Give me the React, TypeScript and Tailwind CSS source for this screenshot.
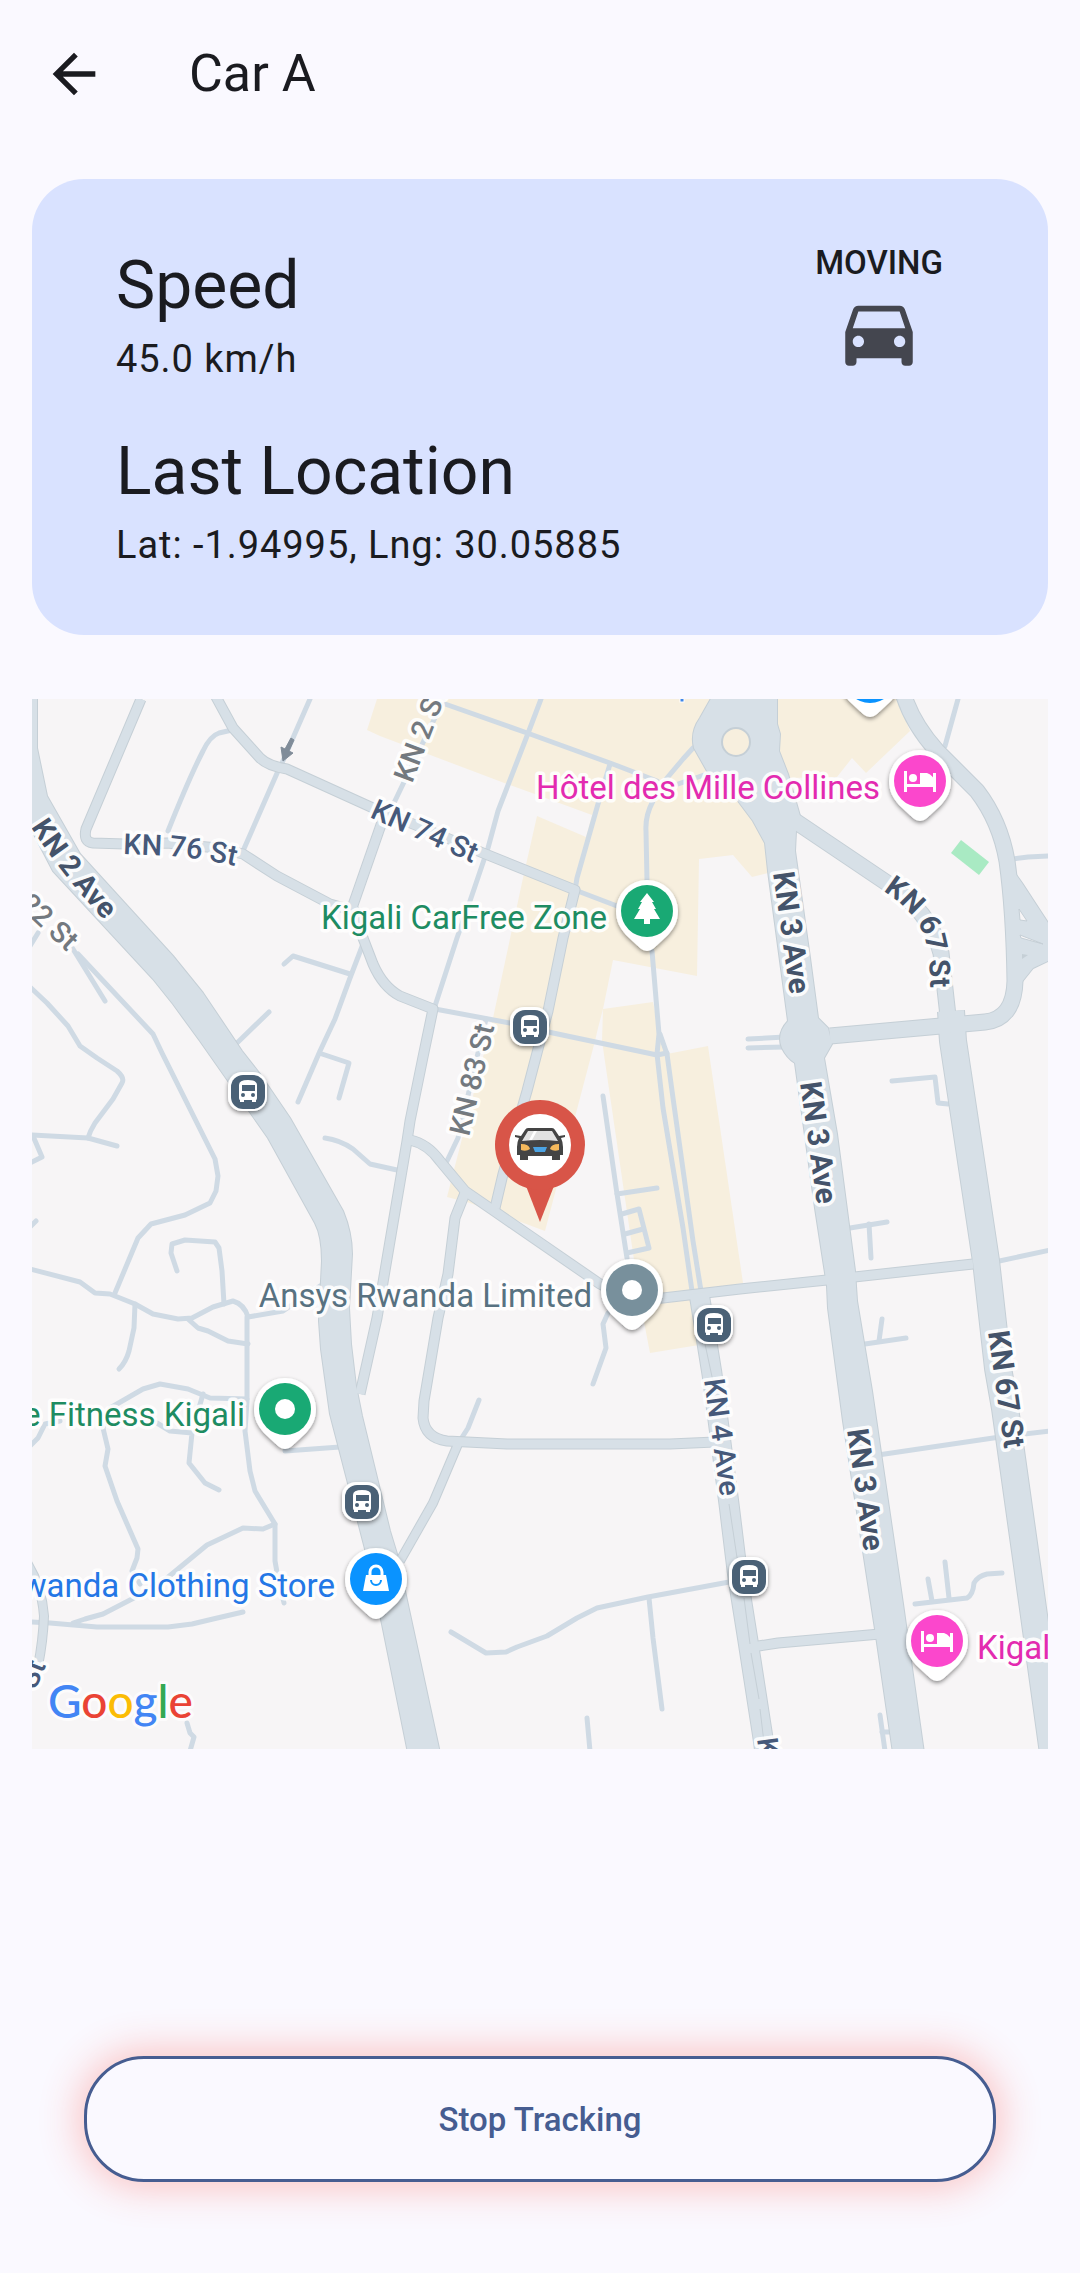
import React from "react";
import { MdArrowBack, MdDirectionsCar } from "react-icons/md";

const LAND =
  "M377 698L367 729L380 735L507 783L592 814L586 836L537 815L523 877L493 1017L447 1196L470 1202L545 1230L595 1040L598 1027L603 1008L613 959L697 975L699 858L733 854L752 876L768 872L788 777L837 776L852 757L866 772L910 730L897 698Z M603 1008L653 1001L660 1035L667 1053L708 1045L743 1282L697 1290L705 1343L650 1352L640 1300L602 1040Z";

const LANES = [
  "M232 729L219 732Q210 735 203 750Q190 775 168 830",
  "M310 698L282 762",
  "M278 770L243 850",
  "M363 943L350 977L335 1018L320 1050L298 1101",
  "M322 1053L349 1062L339 1097",
  "M350 973L293 955L284 963",
  "M269 1011L237 1042",
  "M73 948L105 1000",
  "M78 953L153 1033L162 1052L215 1158L218 1175L216 1190L210 1202L185 1214L151 1223L138 1237L115 1292",
  "M30 945L38 932",
  "M30 986L47 1002L68 1025L80 1045L97 1057L117 1070Q125 1077 122 1082L113 1098L95 1122Q90 1130 88 1137",
  "M30 1134L88 1137L117 1145",
  "M33 1135L42 1156L30 1162",
  "M30 1226L36 1220",
  "M30 1268L80 1281L95 1292L110 1293L135 1303L153 1313L178 1318L192 1317L213 1306L233 1300Q244 1303 248 1316L283 1310L320 1285",
  "M135 1303L134 1327L129 1350Q126 1361 119 1368",
  "M177 1270L171 1252L172 1243L185 1239L215 1241L219 1247L222 1270L224 1303",
  "M188 1318L198 1327L208 1330L228 1340L248 1343",
  "M247 1316L247 1400L245 1430L250 1470L255 1490L275 1523L275 1560L278 1577L284 1602",
  "M247 1398L210 1397L188 1388L160 1383L143 1388L110 1407L103 1427L108 1448L105 1465L117 1500L138 1548L137 1557L132 1570L140 1583",
  "M30 1445L38 1437L45 1423L60 1420",
  "M203 1393L199 1407",
  "M157 1422L170 1430L192 1432L189 1462L205 1482L219 1489",
  "M275 1523L263 1528L243 1527L207 1544L167 1577L132 1598L103 1613L85 1618L73 1622",
  "M30 1621L50 1622L97 1626L168 1626L192 1623L213 1618L243 1611",
  "M285 1450L340 1446",
  "M187 1722L190 1732L194 1736L190 1750",
  "M325 1137Q340 1139 353 1148L370 1163L397 1169",
  "M445 703L530 733L610 762L657 780",
  "M392 806L443 700",
  "M541 698L527 735L498 810L488 847L470 900L457 937L435 1005",
  "M610 763L598 803L577 877L575 889L617 905",
  "M693 747L683 758L667 777L653 800Q645 815 646 830L647 880",
  "M678 783L707 773",
  "M435 1008L510 1022L553 1032L657 1054L667 1052",
  "M486 1018L458 1137L447 1160",
  "M603 1095L617 1193L627 1257",
  "M617 1193L657 1187",
  "M622 1213L639 1208L649 1247L627 1252",
  "M625 1233L643 1228",
  "M608 1312L603 1323L606 1347L593 1383",
  "M652 950L659 1033L657 1053L663 1107L683 1227L692 1290",
  "M660 1033L667 1053L673 1097L693 1240L701 1290",
  "M479 1399L468 1427L461 1438",
  "M451 1631L486 1652L506 1651L517 1646L547 1635L577 1617L597 1607L648 1596L740 1579",
  "M649 1597L653 1637L662 1708",
  "M587 1717L590 1750",
  "M878 1454L1000 1436L1050 1430",
  "M915 1603L967 1597Q973 1594 974 1582Q978 1575 987 1573L1002 1572",
  "M928 1578L932 1600",
  "M945 1561L949 1597",
  "M880 1714L885 1750",
  "M882 1731L890 1731",
  "M748 1047L785 1046",
  "M748 1038L785 1036",
  "M892 1080L935 1076L938 1102L948 1103",
  "M850 1227L887 1221",
  "M869 1223L871 1257",
  "M990 1262L1050 1249",
  "M865 1343L906 1337",
  "M882 1318L879 1340",
  "M958 698L945 745",
  "M1013 858L1028 856L1050 855",
];

type Road = { d: string; w: number };

const ROADS: Road[] = [
  { d: "M141 698L86 828Q83 841 93 842L125 843L167 842L217 847L243 853L277 875L330 903L355 910L363 937L373 963Q383 986 400 995L433 1008L423 1056L410 1120L407 1140L390 1240L377 1317L360 1393", w: 10 },
  { d: "M383 818L352 907", w: 10 },
  { d: "M215 694L233 727L260 757Q268 765 287 768L373 807L413 823L483 852L575 889L563 937L548 1010L527 1090L503 1173L495 1207", w: 10 },
  { d: "M410 1139Q428 1143 440 1160L465 1190L497 1212L600 1283L632 1300L663 1297L740 1288L827 1279L973 1263", w: 10 },
  { d: "M465 1192L455 1217L448 1273L438 1317L424 1400L423 1417Q425 1437 447 1440L507 1443L670 1443L715 1441", w: 10 },
  { d: "M458 1443L433 1502L400 1560", w: 9 },
  { d: "M26 1560Q42 1585 44 1615Q43 1640 38 1665", w: 9 },
  { d: "M699 1292L712 1373L729 1503L738 1577L748 1640L763 1737L765 1752", w: 20 },
  { d: "M752 1646L778 1642L880 1633", w: 10 },
  { d: "M792 818L887 882Q930 910 941 952L948 1015", w: 16 },
  { d: "M951 1010L953 1040L986 1260L998 1367L1005 1407L1026 1557L1053 1752", w: 27 },
  { d: "M903 692Q912 722 937 750L977 790Q1000 820 1007 860Q1014 910 1015 980Q1014 1018 985 1021L830 1035", w: 16 },
];

const AREAS = [
  "M28 690L37 698L37 747L47 795L80 853L173 955L203 992L242 1050L260 1073L290 1117L343 1210Q352 1232 352 1253L349 1307L351 1343L356 1385L362 1415L390 1530L397 1553L440 1752L408 1752L382 1623L365 1548L330 1413L321 1348L319 1320L322 1260Q322 1235 315 1222L268 1137L200 1040L173 1003L153 978L53 870L28 822Z",
  "M713 694L700 717Q690 731 694 747L707 770L738 800L753 820L765 842L768 870L788 1020Q776 1033 782 1047Q787 1057 795 1062L815 1207L827 1285L828 1307L843 1420L875 1628L893 1752L924 1752L903 1603L872 1390L857 1300L855 1270L837 1133L824 1057L832 1043L828 1027L818 1017L810 957L795 850L796 830L800 815L798 808L788 773L779 750L780 733L777 723L777 694Z",
  "M1012 868L1022 882L1052 928L1052 958L1033 967L1021 982L1010 980Z",
];

function Pin({ x, y, color, children }: { x: number; y: number; color: string; children?: React.ReactNode }) {
  return (
    <g transform={`translate(${x} ${y})`}>
      <path
        filter="url(#drop)"
        fill="#fff"
        d="M0-31A31 31 0 0 1 31 0C31 10 27 17 21 24L7 37Q0 43-7 37L-21 24C-27 17-31 10-31 0A31 31 0 0 1 0-31Z"
      />
      <circle r="26" fill={color} />
      {children}
    </g>
  );
}

function Bed() {
  return (
    <g fill="#fff">
      <rect x="-16" y="-10" width="3" height="21" />
      <rect x="-16" y="3" width="31" height="3" />
      <rect x="13" y="-8" width="3" height="19" />
      <circle cx="-7" cy="-3" r="4" />
      <path d="M0-8H7Q14-6 15 3H0Z" />
    </g>
  );
}

function Bus({ x, y }: { x: number; y: number }) {
  return (
    <g transform={`translate(${x} ${y})`}>
      <rect filter="url(#drop)" x="-20" y="-20" width="39" height="39" rx="14" fill="#fff" />
      <rect x="-17" y="-17" width="34" height="34" rx="12" fill="#4a6176" />
      <path fill="#fff" d="M-9-7Q-9-12 0-12Q9-12 9-7V6Q9 8 8 8V10H4V8H-4V10H-8V8Q-9 8-9 6Z" />
      <rect x="-6" y="-7" width="13" height="6" fill="#4a6176" />
      <circle cx="-5" cy="3" r="2" fill="#4a6176" />
      <circle cx="5" cy="3" r="2" fill="#4a6176" />
    </g>
  );
}

const STREETS = [
  { t: "KN 2 St", x: 412, y: 783, r: -69, c: "#73797f", w: 500 },
  { t: "KN 74 St", x: 369, y: 816, r: 24, c: "#46597a", w: 500 },
  { t: "KN 83 St", x: 469, y: 1136, r: -77, c: "#73797f", w: 500 },
  { t: "KN 4 Ave", x: 704, y: 1379, r: 82, c: "#46597a", w: 500 },
  { t: "KN 4 Ave", x: 757, y: 1738, r: 82, c: "#46597a", w: 500 },
];

const AVENUES = [
  { t: "KN 3 Ave", x: 773, y: 872, r: 82, c: "#44536a", w: 700 },
  { t: "KN 3 Ave", x: 800, y: 1082, r: 82, c: "#44536a", w: 700 },
  { t: "KN 3 Ave", x: 847, y: 1429, r: 82, c: "#44536a", w: 700 },
  { t: "KN 67 St", x: 988, y: 1331, r: 82, c: "#44536a", w: 700 },
];

function TrackingMap() {
  return (
    <svg
      viewBox="32 698 1016 1050"
      className="block h-auto w-full"
      role="img"
      aria-label="Map around the car"
      fontFamily='Roboto, "Noto Sans", sans-serif'
    >
      <defs>
        <filter id="drop" x="-30%" y="-30%" width="160%" height="170%">
          <feDropShadow dx="0" dy="2" stdDeviation="2" floodColor="#000" floodOpacity="0.45" />
        </filter>
        <path id="kn2" d="M31 826Q61 873 106 921L130 946" />
        <path id="kn76" d="M123 853L172 855Q205 858 245 867L270 873" />
        <path id="kn67" d="M883 890Q912 908 923 932Q930 952 930 980L932 1030" />
      </defs>
      <rect x="30" y="696" width="1020" height="1054" fill="#f7f5f6" />
      <path d={LAND} fill="#f7efde" />
      <path d="M961 839L989 861L979 874L951 852Z" fill="#a9eac3" />

      <g fill="none" stroke="#cfdae4" strokeWidth="5" strokeLinecap="round" strokeLinejoin="round">
        {LANES.map((d) => (
          <path key={d} d={d} />
        ))}
      </g>
      <g stroke="#c5cfd6" strokeLinejoin="round">
        {ROADS.map((r) => (
          <path key={r.d} d={r.d} fill="none" strokeWidth={r.w + 1} />
        ))}
        {AREAS.map((d) => (
          <path key={d} d={d} strokeWidth="2" />
        ))}
      </g>
      <g strokeLinejoin="round">
        {AREAS.map((d) => (
          <path key={d} d={d} fill="#d7e0e7" />
        ))}
        {ROADS.map((r) => (
          <path key={r.d} d={r.d} fill="none" stroke="#d7e0e7" strokeWidth={r.w - 1} />
        ))}
      </g>
      <path d="M705 1343L714 1385M729 1503L739 1570M744 1597L750 1643M751 1652L759 1698M760 1708L765 1750" stroke="#c5cfd6" strokeWidth="1" fill="none" />
      <path d="M1019 908L1027 920L1020 919ZM1020 934L1043 943L1021 937Z" fill="#f7f5f6" stroke="#c5cfd6" />
      <path d="M1022 953L1028 954L1022 958Z" fill="#c5cfd6" />
      <circle cx="736" cy="741" r="14" fill="#f7efde" stroke="#c5cfd6" strokeWidth="2" />
      <path d="M291 737L294 739L289 750L293 752L283 760L281 746L285 748Z" fill="#808c99" stroke="#808c99" />
      <rect x="680" y="696" width="4" height="5" fill="#3f86e8" stroke="#fff" strokeWidth="1" />

      <g paintOrder="stroke" stroke="#fff" strokeOpacity="0.9" strokeWidth="7" strokeLinejoin="round">
        <g fontSize="29">
          {STREETS.map((l) => (
            <text key={`${l.x}-${l.y}`} transform={`translate(${l.x} ${l.y}) rotate(${l.r})`} fill={l.c} fontWeight={l.w}>
              {l.t}
            </text>
          ))}
          <text fill="#46597a" fontWeight="500">
            <textPath href="#kn76">KN 76 St</textPath>
          </text>
          <text fill="#44536a" fontWeight="700">
            <textPath href="#kn2">KN 2 Ave</textPath>
          </text>
          <text fill="#44536a" fontWeight="700">
            <textPath href="#kn67">KN 67 St</textPath>
          </text>
          <text transform="translate(67 951) rotate(43)" textAnchor="end" fill="#73797f" fontWeight="500">
            22 St
          </text>
          <text transform="translate(46 1664) rotate(-68)" textAnchor="end" fill="#46597a" fontWeight="500">
            St
          </text>
        </g>
        <g fontSize="30">
          {AVENUES.map((l) => (
            <text key={`${l.x}-${l.y}`} transform={`translate(${l.x} ${l.y}) rotate(${l.r})`} fill={l.c} fontWeight={l.w}>
              {l.t}
            </text>
          ))}
        </g>
      </g>

      <Bus x={530} y={1026} />
      <Bus x={248} y={1091} />
      <Bus x={714} y={1324} />
      <Bus x={362} y={1501} />
      <Bus x={749} y={1576} />

      <g fontSize="33" paintOrder="stroke" stroke="#fff" strokeOpacity="0.9" strokeWidth="7" strokeLinejoin="round">
        <text x="880" y="798" textAnchor="end" fill="#e32bb0">Hôtel des Mille Collines</text>
        <text x="607" y="928" textAnchor="end" fill="#1e8c62">Kigali CarFree Zone</text>
        <text x="592" y="1306" textAnchor="end" fill="#587281">Ansys Rwanda Limited</text>
        <text x="245" y="1425" textAnchor="end" fill="#1e8c62">e Fitness Kigali</text>
        <text x="335" y="1596" textAnchor="end" fill="#2477e6">wanda Clothing Store</text>
        <text x="977" y="1658" fill="#e32bb0">Kigali</text>
      </g>

      <Pin x={870} y={676} color="#0a93ff" />
      <Pin x={920} y={780} color="#fb47cc">
        <Bed />
      </Pin>
      <Pin x={937} y={1640} color="#fb47cc">
        <Bed />
      </Pin>
      <Pin x={647} y={910} color="#19a974">
        <path fill="#fff" d="M0-18L7-9H5L9-2H7L13 8H3V13H-3V8H-13L-7-2H-9L-5-9H-7Z" />
      </Pin>
      <Pin x={632} y={1289} color="#78909c">
        <circle r="10" fill="#fff" />
      </Pin>
      <Pin x={285} y={1408} color="#19a974">
        <circle r="10" fill="#fff" />
      </Pin>
      <Pin x={376} y={1578} color="#0a93ff">
        <path fill="#fff" d="M-10-4H10L13 12H-13Z" />
        <path fill="none" stroke="#fff" strokeWidth="3" d="M-6-3V-7A6 6 0 0 1 6-7V-3" />
        <path fill="none" stroke="#0a93ff" strokeWidth="2" d="M-5 1A5 5 0 0 0 5 1" />
      </Pin>

      <g transform="translate(540 1144)">
        <path fill="#d85548" d="M-14 41L0 77L14 41Z" />
        <circle r="45" fill="#d85548" />
        <circle r="31" fill="#fff" />
        <path fill="#444" d="M-12-17H12Q14-17 15-15L19-9L25-10V-8L21-7Q23-3 23 2V10H20V15H12V11H-12V15H-20V10H-23V2Q-23-3-21-7L-25-8V-10L-19-9L-15-15Q-14-17-12-17Z" />
        <path fill="#e2e2e2" d="M-12-14H12L18-4Q0-6-18-4Z" />
        <path fill="#fff" d="M-6-14H-3L-8-5H-11Z" />
        <path fill="#f5b95c" d="M-19-1Q-11-1-10 4Q-14 7-19 5ZM19-1Q11-1 10 4Q14 7 19 5Z" />
        <path fill="#4ba3e3" d="M-7 2H7L5 7H-5Z" />
      </g>

      <text
        x="48"
        y="1717"
        fontFamily="Lato, sans-serif"
        fontSize="46"
        fontWeight="500"
        paintOrder="stroke"
        stroke="#fff"
        strokeOpacity="0.7"
        strokeWidth="6"
        strokeLinejoin="round"
      >
        <tspan fill="#4285f4">G</tspan>
        <tspan fill="#ea4335">o</tspan>
        <tspan fill="#fbbc05">o</tspan>
        <tspan fill="#4285f4">g</tspan>
        <tspan fill="#34a853">l</tspan>
        <tspan fill="#ea4335">e</tspan>
      </text>
    </svg>
  );
}

function Reading({ title, value }: { title: string; value: string }) {
  return (
    <div>
      <h2 className="text-[66px] leading-[90px]">{title}</h2>
      <p className="text-[38px] leading-14 tracking-wide">{value}</p>
    </div>
  );
}

export default function App() {
  return (
    <div className="flex min-h-screen flex-col bg-[#faf9ff] font-[Roboto,'Noto_Sans',sans-serif] text-[#1a1b20]">
      <header className="flex h-[147px] items-center gap-[83px] px-[42px]">
        <button type="button" aria-label="Back">
          <MdArrowBack className="size-16" />
        </button>
        <h1 className="text-[52px] leading-16">Car A</h1>
      </header>

      <main className="flex grow flex-col px-8 pt-8">
        <section className="flex items-start justify-between rounded-[52px] bg-[#d9e2ff] pt-[62px] pr-[105px] pb-[62px] pl-[84px]">
          <div className="flex flex-col gap-10">
            <Reading title="Speed" value="45.0 km/h" />
            <Reading title="Last Location" value="Lat: -1.94995, Lng: 30.05885" />
          </div>
          <div className="flex flex-col items-center gap-0.5">
            <span className="text-[33px] leading-11 font-medium">MOVING</span>
            <MdDirectionsCar className="size-[90px] text-[#44464f]" />
          </div>
        </section>

        <section className="mt-16">
          <TrackingMap />
        </section>

        <div className="mt-auto px-[52px] pt-16 pb-[91px]">
          <button
            type="button"
            className="h-[126px] w-full rounded-[60px] border-[3px] border-[#465d91] bg-[#faf9ff] pt-0.5 text-[33px] leading-11 font-medium text-[#465d91] shadow-[0_0_40px_4px_rgba(255,60,40,0.3)]"
          >
            Stop Tracking
          </button>
        </div>
      </main>
    </div>
  );
}
